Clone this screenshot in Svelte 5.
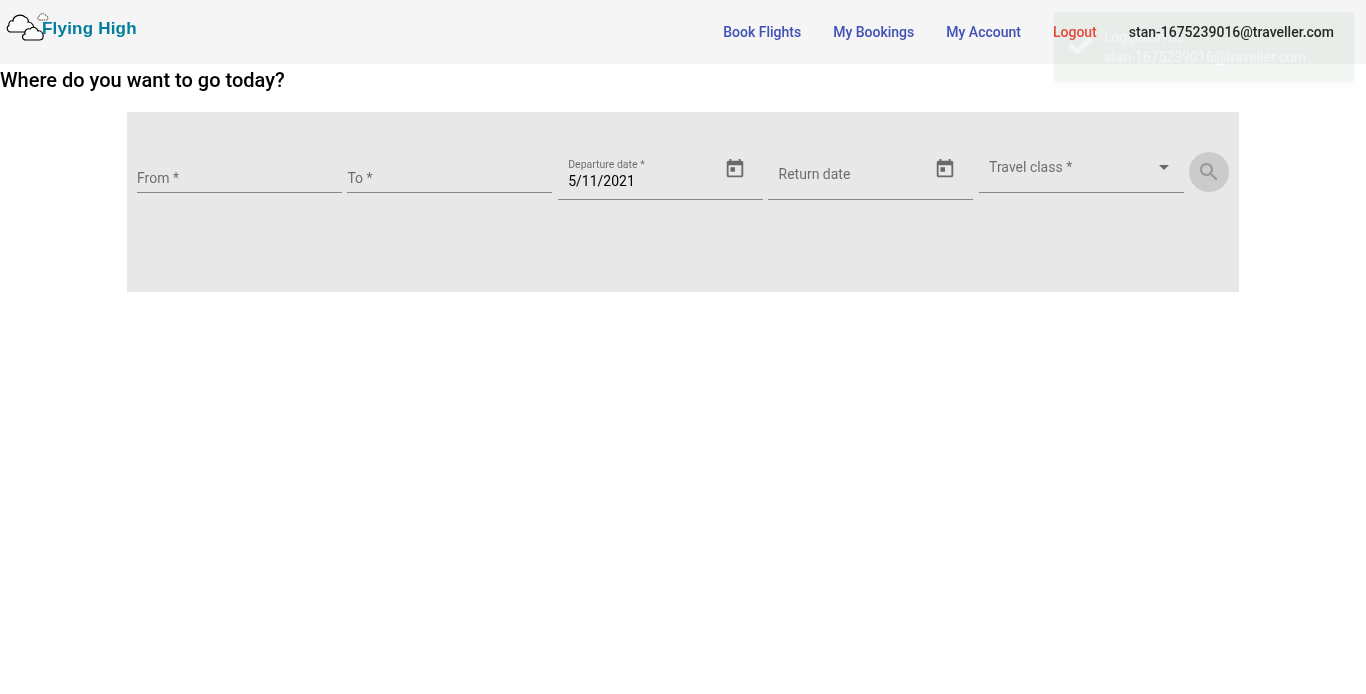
<script lang="ts">
    const calendar = "M19 3h-1V1h-2v2H8V1H6v2H5c-1.11 0-1.99.9-1.99 2L3 19c0 1.1.89 2 2 2h14c1.1 0 2-.9 2-2V5c0-1.1-.9-2-2-2zm0 16H5V8h14v11zM7 10h5v5H7z"
    const links = [
        { title: "Book Flights", cls: "link" },
        { title: "My Bookings", cls: "link" },
        { title: "My Account", cls: "link" },
        { title: "Logout", cls: "logout" },
    ]
</script>

<header>
    <div class="logo">
        <svg width="42" height="42" viewBox="0 0 42 42" aria-hidden="true">
            <path class="cloud" d="M11 32C7 32 6 27 9 25.5 8 22 11 20 13 21 13 16 21 13 25 17 28 18 29 21 28 22 32 22 35 26 33 30 32 32 29 32 27 32Z" />
            <path class="cloud" d="M26 40C22 40 21 35 25 34 24 31 27 28 30 29 32 26 37 27 38 31 41 30 44 34 43 37 43 39 41 40 39 40Z" />
            <path class="tiny" d="M40 20C37 20 37 17 39 17 39 14 43 12 45 15 47 15 49 18 47 20Z" />
        </svg>
        <span>Flying High</span>
    </div>
    <nav>
        {#each links as l}
            <a href="#top" class={l.cls}>{l.title}</a>
        {/each}
        <span class="email">stan-1675239016@traveller.com</span>
    </nav>
</header>

<main>
    <h6>Where do you want to go today?</h6>
    <form>
        <div class="field plain"><span class="hint">From *</span></div>
        <div class="field plain"><span class="hint">To *</span></div>
        <div class="field date">
            <div class="filled">
                <small>Departure date *</small>
                <span class="value">5/11/2021</span>
            </div>
            <svg class="cal" width="22" height="22" viewBox="0 0 24 24" aria-hidden="true"><path d={calendar} /></svg>
        </div>
        <div class="field date">
            <div class="empty"><span class="hint">Return date</span></div>
            <svg class="cal" width="22" height="22" viewBox="0 0 24 24" aria-hidden="true"><path d={calendar} /></svg>
        </div>
        <div class="field select">
            <span class="hint">Travel class *</span>
            <svg width="24" height="24" viewBox="0 0 24 24" aria-hidden="true"><path d="M7 10l5 5 5-5z" /></svg>
        </div>
        <button type="button" aria-label="Search" disabled>
            <svg width="24" height="24" viewBox="0 0 24 24" aria-hidden="true"><path d="M15.5 14h-.79l-.28-.27C15.41 12.59 16 11.11 16 9.5 16 5.91 13.09 3 9.5 3S3 5.91 3 9.5 5.91 16 9.5 16c1.61 0 3.09-.59 4.23-1.57l.27.28v.79l5 4.99L20.49 19l-4.99-5zm-6 0C7.01 14 5 11.99 5 9.5S7.01 5 9.5 5 14 7.01 14 9.5 11.99 14 9.5 14z" /></svg>
        </button>
    </form>
</main>

<div class="toast">
    <svg width="25" height="18" viewBox="0 0 25 18" aria-hidden="true"><path d="M0 10 4 6 9 11 21 0 25 4 9 18Z" /></svg>
    <p>Logged in as<br />stan-1675239016@traveller.com</p>
</div>

<style>
    :global(body) {
        font-family: Roboto, "Liberation Sans", sans-serif;
        background: #fff;
    }
    header,
    main {
        /* keeps text on greyscale antialiasing */
        will-change: transform;
    }
    header {
        height: 64px;
        display: flex;
        justify-content: space-between;
        align-items: center;
        background-color: #f5f5f5;
    }
    .logo {
        display: flex;
        align-self: flex-start;
    }
    .logo svg {
        flex: none;
        overflow: visible;
    }
    .cloud,
    .tiny {
        fill: #fbfbfb;
        stroke: #000;
        stroke-width: 1.1;
    }
    .tiny {
        stroke-width: 0.7;
        stroke-dasharray: 1.5 0.7;
    }
    .logo span {
        margin-top: 19px;
        font-family: "Liberation Sans", Arial, sans-serif;
        font-weight: 700;
        font-size: 17px;
        letter-spacing: 0.2px;
        line-height: 20px;
        color: #027e9c;
    }
    nav {
        display: flex;
        gap: 32px;
        padding-right: 32px;
        font-size: 14px;
        font-weight: 500;
    }
    a {
        text-decoration: none;
    }
    .link {
        color: #3f51b5;
    }
    .logout {
        color: #f44336;
    }
    .email {
        color: rgba(0, 0, 0, 0.87);
    }
    h6 {
        margin: 0 0 16px;
        font-size: 20px;
        font-weight: 500;
        line-height: 32px;
        color: #000;
    }
    form {
        width: 1112px;
        height: 180px;
        box-sizing: border-box;
        margin: 0 auto;
        padding: 32px 10px 0;
        display: flex;
        align-items: flex-start;
        gap: 5.4px;
        background-color: #e8e8e8;
    }
    .field {
        width: 205px;
        flex: none;
        box-sizing: border-box;
        border-bottom: 1px solid rgba(0, 0, 0, 0.42);
        font-size: 14px;
        line-height: 16px;
    }
    .hint {
        color: rgba(0, 0, 0, 0.54);
    }
    .plain {
        height: 49px;
        display: flex;
        align-items: flex-end;
        padding-bottom: 6px;
    }
    .date {
        height: 56px;
        display: flex;
        justify-content: space-between;
        padding: 0 17px 0 10.4px;
    }
    .filled {
        display: flex;
        flex-direction: column;
        padding-top: 15px;
    }
    small {
        font-size: 10.5px;
        line-height: 12px;
        color: rgba(0, 0, 0, 0.54);
    }
    .value {
        margin-top: 2px;
        color: #000;
    }
    .empty {
        padding-top: 22px;
    }
    .cal {
        margin-top: 14px;
        fill: rgba(0, 0, 0, 0.54);
    }
    .select {
        height: 49px;
        display: flex;
        justify-content: space-between;
        padding: 15px 8px 0 10.5px;
    }
    .select svg {
        margin-top: -4px;
        fill: rgba(0, 0, 0, 0.54);
    }
    button {
        width: 40px;
        height: 40px;
        flex: none;
        margin-top: 8px;
        padding: 8px;
        border: 0;
        border-radius: 50%;
        background-color: rgba(0, 0, 0, 0.12);
        display: flex;
    }
    button svg {
        fill: rgba(0, 0, 0, 0.26);
    }
    .toast {
        position: absolute;
        top: 12px;
        right: 12px;
        width: 300px;
        height: 70px;
        box-sizing: border-box;
        display: flex;
        align-items: center;
        gap: 11px;
        padding: 0 0 0 14px;
        border-radius: 4px;
        background-color: #458d62;
        color: #fff;
        opacity: 0.07;
        box-shadow: 0 3px 5px rgba(0, 0, 0, 0.2), 0 6px 10px rgba(0, 0, 0, 0.14);
    }
    .toast svg {
        flex: none;
        margin-bottom: 2px;
        fill: #fff;
    }
    .toast p {
        margin: 0;
        font-size: 14px;
        line-height: 20px;
    }
</style>
